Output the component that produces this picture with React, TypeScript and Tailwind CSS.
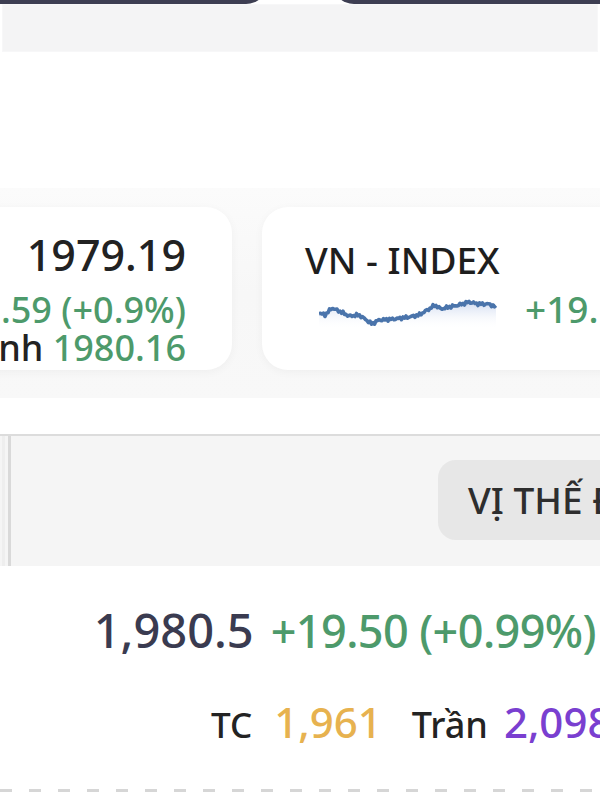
import React from 'react';

const base: [number, number][] = [
  [0, 18], [6, 20], [13, 13], [20, 16], [30, 21], [40, 20], [46, 24], [53, 29], [60, 25],
  [75, 24], [90, 22], [100, 20], [110, 14], [116, 10], [122, 14], [130, 12], [140, 10],
  [150, 7], [160, 9], [170, 9], [177, 12],
];

function sparkPoints() {
  const pts: string[] = [];
  for (let x = 0; x <= 177; x += 1.5) {
    let i = 0;
    while (i < base.length - 2 && base[i + 1][0] < x) i++;
    const [x0, y0] = base[i];
    const [x1, y1] = base[i + 1];
    const t = Math.min(1, Math.max(0, (x - x0) / (x1 - x0)));
    const y = y0 + (y1 - y0) * t + Math.sin(x * 2.3) * 1.1 + Math.cos(x * 5.1) * 0.7;
    pts.push(`${x.toFixed(1)},${y.toFixed(1)}`);
  }
  return pts;
}

function Sparkline() {
  const pts = sparkPoints();
  const area = `0,34 ${pts.join(' ')} 177,34`;
  return (
    <svg width="178" height="36" viewBox="0 0 178 36" className="shrink-0">
      <defs>
        <linearGradient id="sg" x1="0" y1="0" x2="0" y2="1">
          <stop offset="0" stopColor="#c3d1ec" stopOpacity="0.8" />
          <stop offset="1" stopColor="#ffffff" stopOpacity="0" />
        </linearGradient>
      </defs>
      <polygon points={area} fill="url(#sg)" />
      <polyline points={pts.join(' ')} fill="none" stroke="#4a74ab" strokeWidth="3.6" strokeLinejoin="round" />
    </svg>
  );
}

export default function App() {
  return (
    <div className="w-[600px] h-[800px] overflow-hidden bg-white font-['Noto_Sans',sans-serif] font-medium">
      {/* top buttons (cut off) */}
      <div className="flex justify-between h-[4px] overflow-hidden items-end">
        <div className="w-[268px] h-[40px] shrink-0 bg-[#3d3e52] rounded-br-[22px]" />
        <div className="w-[268px] h-[40px] shrink-0 bg-[#3d3e52] rounded-bl-[22px]" />
      </div>
      <div className="h-[48px] mx-[2px] bg-[#f4f4f5] border border-[#f7f7f8]" />

      <div className="h-[136px]" />

      {/* index cards */}
      <div className="h-[210px] overflow-hidden bg-gradient-to-b from-[#fbfbfb] via-[#f7f7f7] to-[#f8f8f8] pt-[19px]">
        <div className="flex gap-[30px] -ml-[68px]">
          <div className="w-[300px] h-[163px] shrink-0 bg-white rounded-[26px] shadow-[0_2px_10px_rgba(0,0,0,0.04)] pr-[46px] pt-[23px] flex flex-col items-end whitespace-nowrap">
            <div className="text-[43px] leading-[50px] text-[#222222]">1979.19</div>
            <div className="text-[36px] leading-[38px] text-[#4d9a6b] mt-[11px]">+18.59 (+0.9%)</div>
            <div className="text-[36px] leading-[38px] text-[#222222]">
              Mở cửa nhanh <span className="text-[#4d9a6b]">1980.16</span>
            </div>
          </div>
          <div className="w-[420px] h-[163px] shrink-0 bg-white rounded-[26px] shadow-[0_2px_10px_rgba(0,0,0,0.04)] pl-[43px] pt-[30px]">
            <div className="text-[37px] leading-[46px] text-[#1e1e1e]">VN - INDEX</div>
            <div className="flex items-center mt-[12px] ml-[14px] gap-[28px]">
              <Sparkline />
              <div className="text-[37px] leading-[40px] text-[#4d9a6b] whitespace-nowrap -mt-[8px]">+19.50 (+0.99%)</div>
            </div>
          </div>
        </div>
      </div>

      <div className="h-[36px]" />

      {/* tab strip */}
      <div className="h-[132px] bg-[#f5f5f5] border-t-2 border-[#dcdcdc] flex">
        <div className="w-[3px] ml-[2px] bg-[#eeeeee]" />
        <div className="w-[3px] ml-[3px] bg-[#d9d9d9]" />
        <div className="flex-1 flex justify-end pt-[24px] overflow-hidden">
          <div className="h-[80px] w-[220px] shrink-0 -mr-[58px] bg-[#e7e7e7] rounded-[18px] pl-[30px] flex items-center whitespace-nowrap overflow-hidden text-[37px] text-[#2e2e2e]">
            VỊ THẾ ĐANG MỞ
          </div>
        </div>
      </div>

      {/* price info */}
      <div className="flex justify-end items-baseline gap-[17px] pr-[4px] pt-[34px] whitespace-nowrap">
        <span className="text-[47px] leading-[60px] text-[#3a3b50]">1,980.5</span>
        <span className="text-[45px] leading-[60px] text-[#4d9a6b] tracking-[-0.6px]">+19.50 (+0.99%)</span>
      </div>
      <div className="flex items-baseline pl-[211px] pt-[36px] whitespace-nowrap overflow-hidden">
        <span className="text-[35px] leading-[50px] text-[#232323]">TC</span>
        <span className="text-[42px] leading-[50px] text-[#e7b24f] ml-[22px]">1,961</span>
        <span className="text-[36px] leading-[50px] text-[#232323] ml-[30px]">Trần</span>
        <span className="text-[42px] leading-[50px] text-[#7a3fd0] ml-[16px]">2,098</span>
      </div>
      <div className="mt-[39px] h-[3px] bg-[repeating-linear-gradient(to_right,#d6d6d6_0_12px,transparent_12px_29px)]" />
    </div>
  );
}
